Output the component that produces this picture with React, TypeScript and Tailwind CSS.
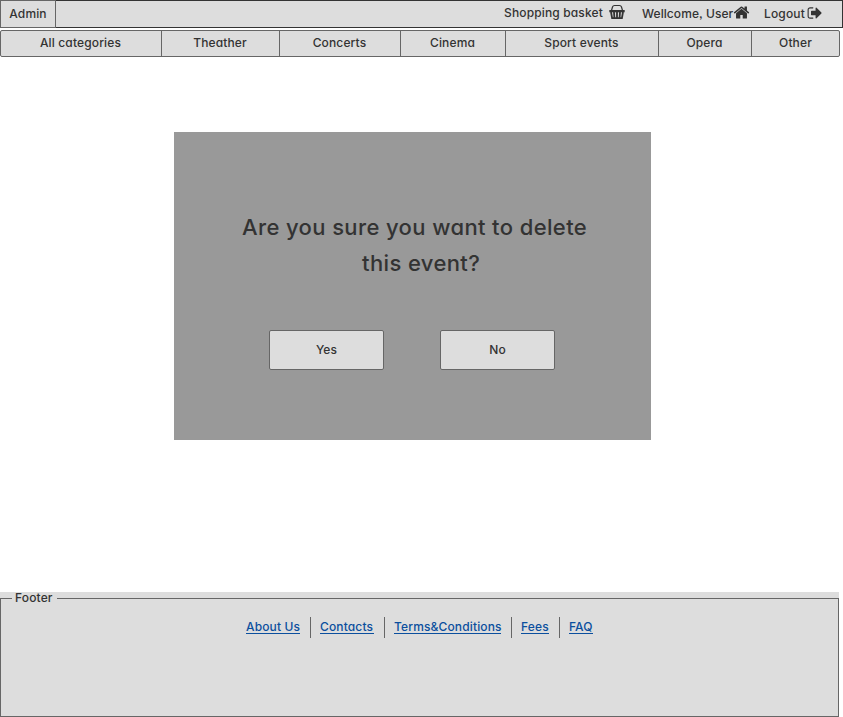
const HomeIcon = () => (
  <svg className="-mt-px h-[17px] w-[17px]" viewBox="0 0 1792 1792" fill="currentColor">
    <path d="M1472 992v480q0 26-19 45t-45 19h-384v-384h-256v384h-384q-26 0-45-19t-19-45v-480q0-1 .5-3t.5-3l575-474 575 474q1 2 1 6zm223-69l-62 74q-8 9-21 11h-3q-13 0-21-7l-692-577-692 577q-12 8-24 7-13-2-21-11l-62-74q-8-10-7-23.500t11-21.500l719-599q32-26 76-26t76 26l244 204v-195q0-14 9-23t23-9h192q14 0 23 9t9 23v408l219 182q10 8 11 21.500t-7 23.500z" />
  </svg>
);

const LogoutIcon = () => (
  <svg className="h-4 w-4" viewBox="0 0 1792 1792" fill="currentColor">
    <path d="M704 1440q0 4 1 20t.5 26.500-3 23.500-10 19.500-20.500 6.500h-320q-119 0-203.500-84.500t-84.500-203.500v-704q0-119 84.500-203.500t203.500-84.500h320q13 0 22.500 9.500t9.500 22.500q0 4 1 20t.5 26.500-3 23.500-10 19.500-20.500 6.500h-320q-66 0-113 47t-47 113v704q0 66 47 113t113 47h312l11.500 1 11.500 3 8 5.500 7 9 2 13.500zm928-544q0 26-19 45l-544 544q-19 19-45 19t-45-19-19-45v-288h-448q-26 0-45-19t-19-45v-384q0-26 19-45t45-19h448v-288q0-26 19-45t45-19 45 19l544 544q19 19 19 45z" />
  </svg>
);

const BasketIcon = () => (
  <svg className="h-4 w-4" viewBox="0 0 16 16" fill="none" stroke="currentColor">
    <path d="M2.500 6.500L3.500 3Q4 1.500 5.500 1.500h5Q12 1.500 12.500 3L13.500 6.500" strokeWidth="1.200" />
    <path d="M.3 6h15.400v2.300H.3z" fill="currentColor" stroke="none" />
    <path d="M2 8l1.100 6.100h9.800L14 8M5 8l.4 6M8 8v6M11 8l-.4 6" strokeWidth="1.800" />
  </svg>
);

const categories = [
  { name: "All categories", box: "w-[161px]" },
  { name: "Theather", box: "w-[118px]" },
  { name: "Concerts", box: "w-[121px]" },
  { name: "Cinema", box: "w-[105px]" },
  { name: "Sport events", box: "w-[153px]" },
  { name: "Opera", box: "w-[93px]" },
  { name: "Other", box: "w-[88px]" },
];

const links = [
  { name: "About Us", box: "w-[54px]" },
  { name: "Contacts", box: "w-[54px]" },
  { name: "Terms&Conditions", box: "w-[107px]" },
  { name: "Fees", box: "w-[28px]" },
  { name: "FAQ", box: "w-[24px]" },
];

export default function App() {
  return (
    <div className="flex h-[717px] w-[843px] flex-col overflow-hidden bg-white font-['Inter',sans-serif] text-[12px] leading-4 font-medium tracking-[0.14px] whitespace-nowrap text-[#333] [font-feature-settings:'cv11','ss03']">
      <header className="flex h-7 shrink-0 border border-[#333] bg-[#ddd]">
        <div className="-my-px -ml-px flex w-14 items-center justify-center border border-[#666]">Admin</div>
        <div className="flex flex-1 items-start">
          <div className="ml-[448px] flex w-[138px] items-start pt-[3px]">
            <span className="w-[105px] pt-px">Shopping basket</span>
            <BasketIcon />
          </div>
          <div className="flex w-[122px] items-start pt-1">
            <span className="w-[91px] pt-px tracking-[0.08px]">Wellcome, User</span>
            <HomeIcon />
          </div>
          <div className="flex items-start pt-1">
            <span className="w-[43px] pt-px">Logout</span>
            <LogoutIcon />
          </div>
        </div>
      </header>

      <nav className="mt-0.5 flex h-[27px] w-[840px] shrink-0 rounded-[2px] border border-[#666] bg-[#ddd]">
        {categories.map((c) => (
          <div key={c.name} className={`${c.box} flex shrink-0 items-center justify-center border-r border-[#666] pr-px pb-0.5 last:border-r-0`}>
            {c.name}
          </div>
        ))}
      </nav>

      <main className="mt-[75px] ml-[174px] h-[308px] w-[477px] shrink-0 bg-[#999]">
        <h1 className="pt-[77px] text-[22px] leading-9 font-medium tracking-[0.38px]">
          <span className="ml-[68px] block">Are you sure you want to delete</span>
          <span className="ml-[188px] block">this event?</span>
        </h1>
        <div className="mt-[49px] ml-[95px] flex gap-14">
          <button className="h-10 w-[115px] rounded-[2px] border border-[#666] bg-[#ddd]">Yes</button>
          <button className="h-10 w-[115px] rounded-[2px] border border-[#666] bg-[#ddd]">No</button>
        </div>
      </main>

      <footer className="mt-[152px] h-[125px] w-[839px] shrink-0 bg-[#ddd] pt-[6px]">
        <div className="h-[119px] border border-[#666]">
          <div className="-mt-[7px] ml-[11px] h-[14px] w-[45px] bg-[#ddd] pl-[3px] leading-[11px]">Footer</div>
          <div className="mt-[11px] ml-[245px] flex h-[21px] text-[#0b4f9e]">
            {links.map((l) => (
              <div key={l.name} className="mr-[9px] flex border-r border-[#666] pr-[10px] last:border-r-0">
                <a className={`${l.box} h-[17px] border-b border-[#0b4f9e] pt-0.5 leading-4 no-underline`}>{l.name}</a>
              </div>
            ))}
          </div>
        </div>
      </footer>
    </div>
  );
}
